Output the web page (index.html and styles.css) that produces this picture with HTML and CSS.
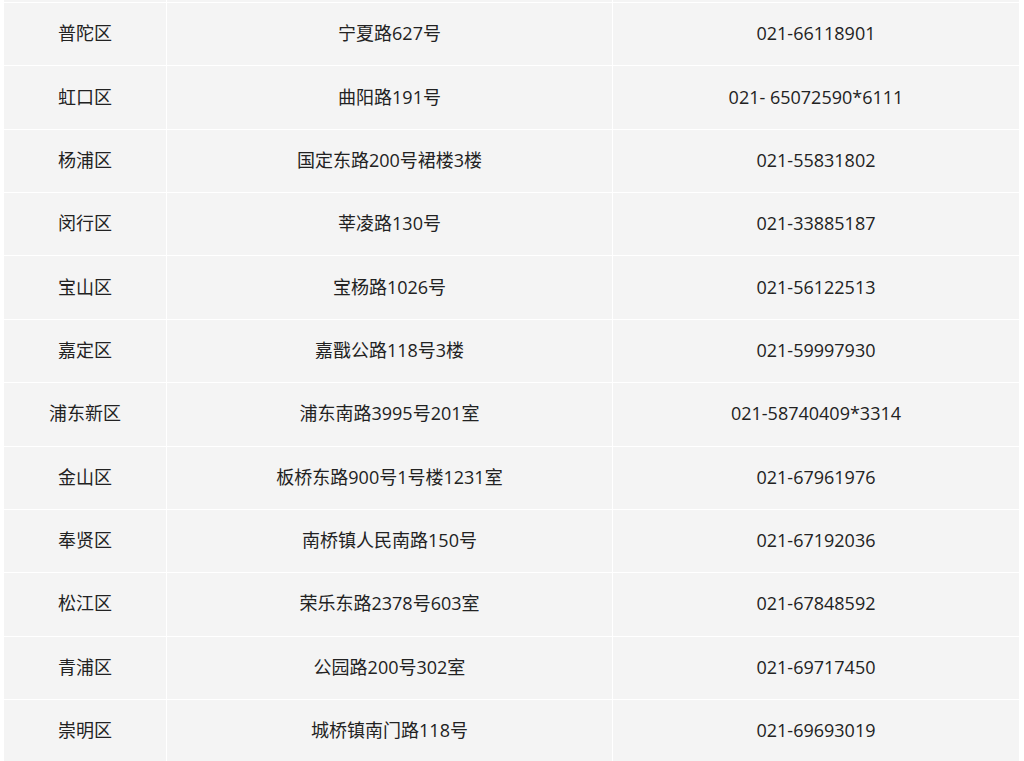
FILE: index.html
```html
<!DOCTYPE html>
<html lang="zh-CN">
<head>
<meta charset="utf-8">
<title>区 地址 电话</title>
<link rel="stylesheet" href="styles.css">
</head>
<body>
<div class="table">
  <div class="cell cap"></div><div class="cell cap"></div><div class="cell cap"></div>
  <div class="cell">普陀区</div><div class="cell">宁夏路627号</div><div class="cell">021-66118901</div>
  <div class="cell">虹口区</div><div class="cell">曲阳路191号</div><div class="cell">021- 65072590*6111</div>
  <div class="cell">杨浦区</div><div class="cell">国定东路200号裙楼3楼</div><div class="cell">021-55831802</div>
  <div class="cell">闵行区</div><div class="cell">莘凌路130号</div><div class="cell">021-33885187</div>
  <div class="cell">宝山区</div><div class="cell">宝杨路1026号</div><div class="cell">021-56122513</div>
  <div class="cell">嘉定区</div><div class="cell">嘉戬公路118号3楼</div><div class="cell">021-59997930</div>
  <div class="cell">浦东新区</div><div class="cell">浦东南路3995号201室</div><div class="cell">021-58740409*3314</div>
  <div class="cell">金山区</div><div class="cell">板桥东路900号1号楼1231室</div><div class="cell">021-67961976</div>
  <div class="cell">奉贤区</div><div class="cell">南桥镇人民南路150号</div><div class="cell">021-67192036</div>
  <div class="cell">松江区</div><div class="cell">荣乐东路2378号603室</div><div class="cell">021-67848592</div>
  <div class="cell">青浦区</div><div class="cell">公园路200号302室</div><div class="cell">021-69717450</div>
  <div class="cell">崇明区</div><div class="cell">城桥镇南门路118号</div><div class="cell">021-69693019</div>
</div>
</body>
</html>
```
FILE: styles.css
```css
html, body {
  margin: 0;
  padding: 0;
  background: #ffffff;
}
body {
  font-family: "Open Sans", "Noto Sans CJK SC", sans-serif;
  font-size: 18px;
  line-height: 24px;
  color: #222222;
  overflow: hidden;
  height: 761px;
}
.table {
  display: grid;
  grid-template-columns: 162px 445px 406px;
  grid-template-rows: 2px repeat(12, 62.36px);
  gap: 1px;
  padding-left: 4px;
  background: #ffffff;
  width: max-content;
}
.cell {
  background: #f4f4f4;
  display: flex;
  align-items: center;
  justify-content: center;
  white-space: nowrap;
  padding-bottom: 2px;
}
.cap {
  min-height: 0;
  padding: 0;
}
```
